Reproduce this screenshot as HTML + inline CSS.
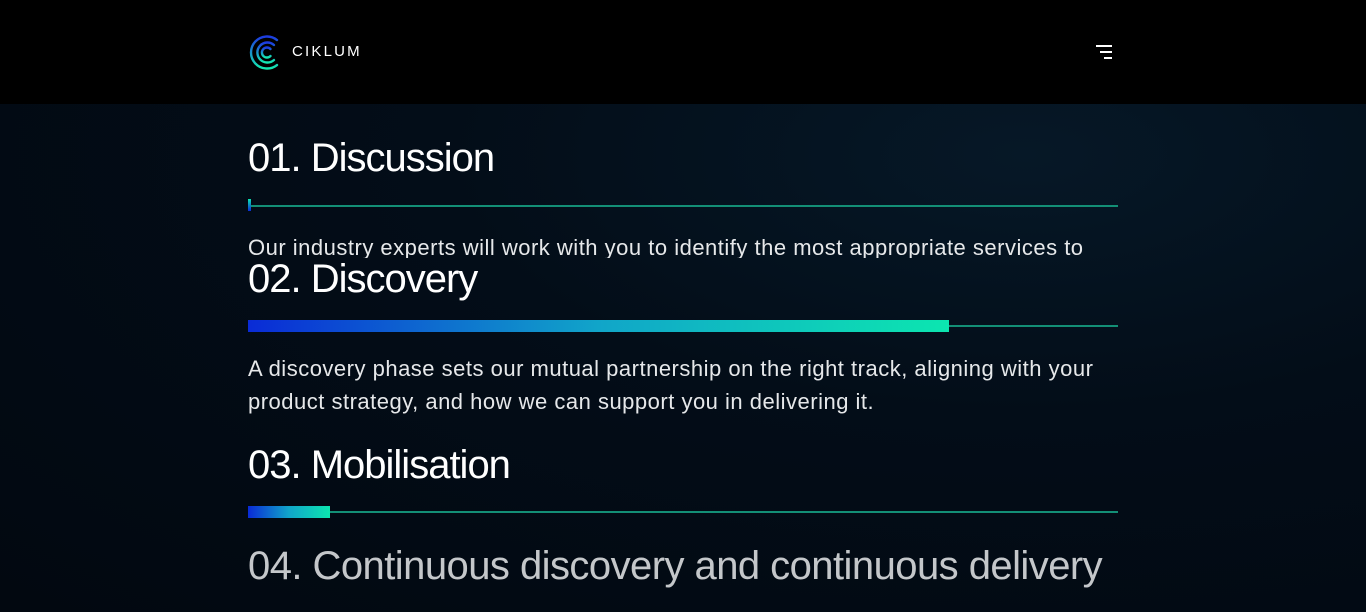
<!DOCTYPE html>
<html><head><meta charset="utf-8"><style>
*{margin:0;padding:0;box-sizing:border-box}
body{width:1366px;height:612px;overflow:hidden;background:#000;font-family:"Liberation Sans",sans-serif;color:#fff}
.hdr{position:absolute;left:0;top:0;width:1366px;height:104px;background:#000}
.main{position:absolute;left:0;top:104px;width:1366px;height:508px;background:radial-gradient(ellipse at 75% 10%,#061827 0%,#030d18 40%,#020810 100%)}
.h{position:absolute;left:248px;font-size:40px;letter-spacing:-1px;white-space:nowrap}
.p{position:absolute;left:248px;width:880px;font-size:22px;line-height:33px;color:#e6e8ea;letter-spacing:0.5px}
.line{position:absolute;left:248px;width:870px;height:2px;background:#138f76}
.bar{position:absolute;left:248px;height:12px;background:linear-gradient(90deg,#0a2bd6,#11a5c9 50%,#0ce6b0)}
</style></head><body>
<div class="hdr">
<svg style="position:absolute;left:248px;top:35px" width="34" height="35" viewBox="0 0 34 35">
<defs><linearGradient id="g" x1="0" y1="0" x2="0" y2="1"><stop offset="0" stop-color="#1d3be0"/><stop offset="1" stop-color="#14e8b0"/></linearGradient></defs>
<g fill="none" stroke="url(#g)" stroke-width="2.4" stroke-linecap="round">
<path d="M29 5A16 16 0 1 0 29 30"/><path d="M26 10A10 10 0 1 0 26 25"/><path d="M22.5 14A5 5 0 1 0 22.5 21"/></g></svg>
<div style="position:absolute;left:292px;top:43px;font-size:15px;letter-spacing:2.2px;color:#fff">CIKLUM</div>
<div style="position:absolute;left:1096px;top:45px;width:16px;height:2px;background:#fff"></div>
<div style="position:absolute;left:1100px;top:51px;width:12px;height:2px;background:#fff"></div>
<div style="position:absolute;left:1104px;top:57px;width:8px;height:2px;background:#fff"></div>
</div>
<div class="main"></div>
<div class="h" style="top:136px">01. Discussion</div>
<div class="line" style="top:205px"></div>
<div style="position:absolute;left:248px;top:199px;width:3px;height:12px;background:linear-gradient(#0ce6b0,#0a2bd6)"></div>
<div class="p" style="top:231px;height:27px;overflow:hidden">Our industry experts will work with you to identify the most appropriate services to</div>
<div class="h" style="top:257px">02. Discovery</div>
<div class="line" style="top:325px"></div>
<div class="bar" style="top:320px;width:701px"></div>
<div class="p" style="top:352px">A discovery phase sets our mutual partnership on the right track, aligning with your product strategy, and how we can support you in delivering it.</div>
<div class="h" style="top:443px">03. Mobilisation</div>
<div class="line" style="top:511px"></div>
<div class="bar" style="top:506px;width:82px"></div>
<div class="h" style="top:544px;color:#c4c7ca;letter-spacing:-0.55px">04. Continuous discovery and continuous delivery</div>
</body></html>
